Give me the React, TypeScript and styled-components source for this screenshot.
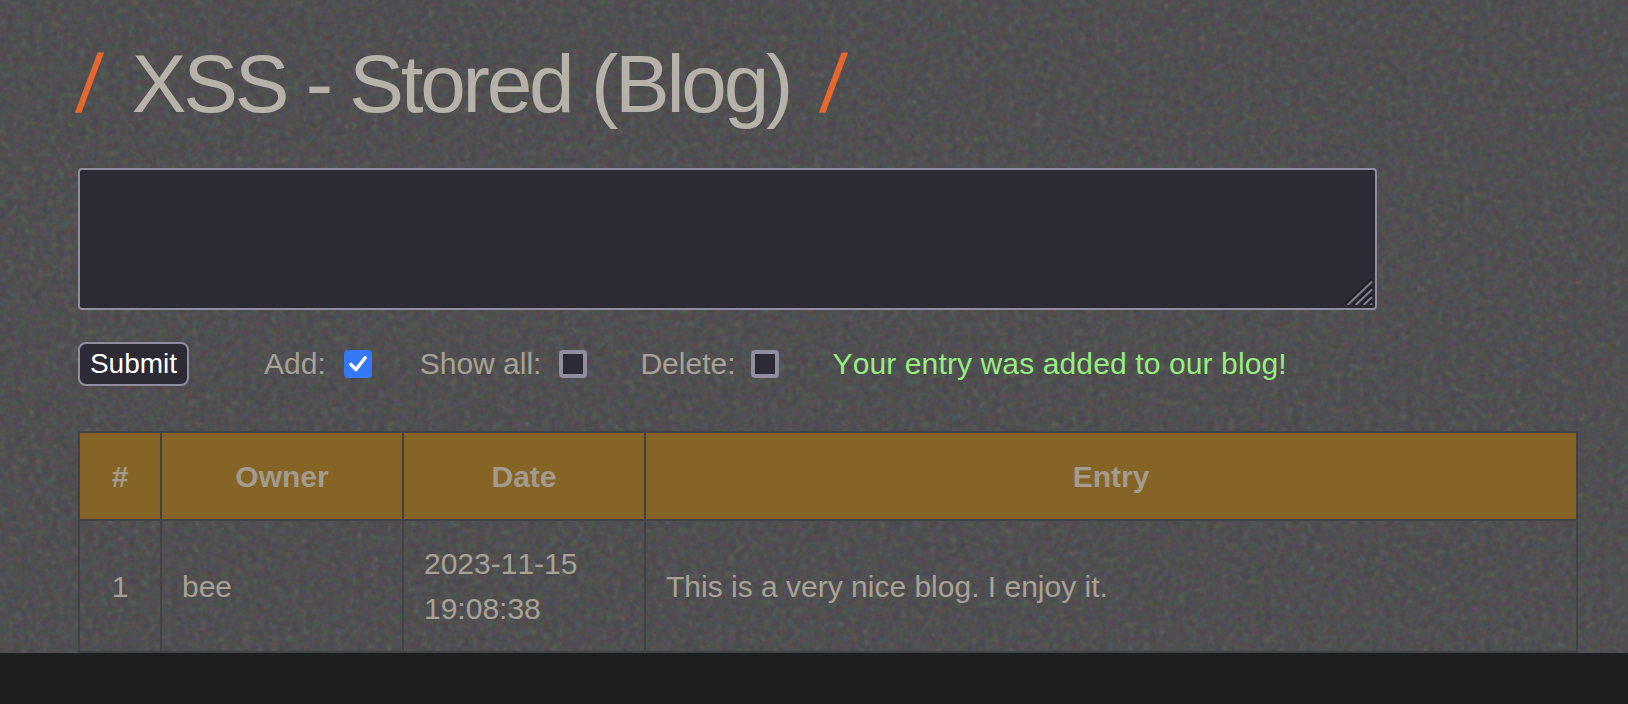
import React from "react";
import styled, { createGlobalStyle } from "styled-components";

const Global = createGlobalStyle`
  html, body { margin: 0; padding: 0; height: 100%; background: #1d1e20; }
  #root { height: 100%; }
  * { box-sizing: border-box; }
`;

const Page = styled.div`
  width: 1628px;
  height: 704px;
  display: flex;
  flex-direction: column;
  overflow: hidden;
  font-family: "Liberation Sans", Arial, sans-serif;
  font-kerning: none;
`;

const Main = styled.main`
  position: relative;
  flex: 0 0 653px;
  background: #4a4a4b;
  padding: 0 50px 0 78px;
  overflow: hidden;
`;

const Grain = styled.svg`
  position: absolute;
  inset: 0;
  width: 100%;
  height: 100%;
`;

const Content = styled.div`
  position: relative;
`;

const Title = styled.h1`
  margin: 0;
  height: 168px;
  padding-top: 37px;
  font-size: 82px;
  line-height: 94px;
  font-weight: 400;
  letter-spacing: -3.25px;
  color: #b6b2aa;
  white-space: nowrap;
`;

const Slash = styled.span`
  display: inline-block;
  color: #e8672f;
  letter-spacing: 0;
  transform: skewX(-6deg);
`;

const Gap = styled.span<{ $w: number }>`
  display: inline-block;
  width: ${(p) => p.$w}px;
`;

const EntryWrap = styled.div`
  position: relative;
  width: 1299px;
  height: 142px;
`;

const EntryBox = styled.textarea`
  display: block;
  width: 100%;
  height: 100%;
  background: #2b2a35;
  border: 2px solid #8f8d9f;
  border-radius: 4px;
  resize: none;
  outline: none;
`;

const Grip = styled.svg`
  position: absolute;
  right: 4px;
  bottom: 5px;
  width: 28px;
  height: 26px;
`;

const Controls = styled.div`
  display: flex;
  align-items: center;
  margin-top: 32px;
  height: 44px;
  font-size: 30px;
  color: #a8a296;
`;

const SubmitButton = styled.button`
  width: 111px;
  height: 44px;
  padding: 0;
  background: #2b2a35;
  border: 2px solid #8f8d9f;
  border-radius: 8px;
  color: #fff;
  font-family: "Liberation Sans", Arial, sans-serif;
  font-size: 28px;
  line-height: 40px;
  margin-right: 75px;
`;

const Label = styled.span<{ $gap: number }>`
  white-space: nowrap;
  margin-right: ${(p) => p.$gap}px;
`;

const Check = styled.span<{ $on?: boolean; $after: number }>`
  flex: none;
  display: flex;
  align-items: center;
  justify-content: center;
  width: 28px;
  height: 28px;
  margin-right: ${(p) => p.$after}px;
  border-radius: 4px;
  background: ${(p) => (p.$on ? "#3478f6" : "#2b2a35")};
  border: ${(p) => (p.$on ? "none" : "4px solid #8f8d9f")};
`;

const Message = styled.span`
  color: #96ee80;
  white-space: nowrap;
  letter-spacing: 0.12px;
`;

const Table = styled.table`
  margin-top: 45px;
  width: 1500px;
  table-layout: fixed;
  border-collapse: collapse;
  font-size: 30px;
  line-height: 45px;
  color: #a8a296;
`;

const HeadCell = styled.th`
  height: 88px;
  padding: 0 20px;
  background: #866425;
  border: 2px solid #414244;
  color: #a39b8f;
  font-weight: 700;
  text-align: center;
`;

const Cell = styled.td<{ $center?: boolean }>`
  height: 132px;
  padding: 20px;
  border: 2px solid #414244;
  text-align: ${(p) => (p.$center ? "center" : "left")};
`;

const BottomBar = styled.footer`
  flex: 1;
  background: #1d1e20;
`;

export default function App() {
  return (
    <Page>
      <Global />
      <Main>
        <Grain aria-hidden="true">
          <filter id="grain" x="0" y="0" width="100%" height="100%" colorInterpolationFilters="sRGB">
            <feTurbulence type="fractalNoise" baseFrequency="0.14" numOctaves="2" seed="7" />
            <feColorMatrix
              type="matrix"
              values="0 0 0 0 0.42  0 0 0 0 0.42  0 0 0 0 0.42  0 0 0 0 0  9 9 0 0 -10.6"
            />
          </filter>
          <rect width="100%" height="100%" filter="url(#grain)" opacity="0.22" />
        </Grain>
        <Content>
          <Title>
            <Slash>/</Slash>
            <Gap $w={31} />
            XSS - Stored (Blog)
            <Gap $w={32} />
            <Slash>/</Slash>
          </Title>
          <EntryWrap>
            <EntryBox aria-label="Entry" />
            <Grip viewBox="0 0 28 26" aria-hidden="true">
              <g strokeWidth="2.2">
                <path d="M1 25 L27 0" stroke="#1d1c24" />
                <path d="M2.5 26 L27 2.5" stroke="#7d7c86" />
                <path d="M9 25 L27 8" stroke="#1d1c24" />
                <path d="M10.5 26 L27 10.5" stroke="#7d7c86" />
                <path d="M17 25 L27 15.5" stroke="#1d1c24" />
                <path d="M18.5 26 L27 18" stroke="#7d7c86" />
                <path d="M24 25 L27 22" stroke="#1d1c24" />
                <path d="M25.5 26 L27 24.5" stroke="#7d7c86" />
              </g>
            </Grip>
          </EntryWrap>
          <Controls>
            <SubmitButton type="button">Submit</SubmitButton>
            <Label $gap={18}>Add:</Label>
            <Check $on $after={48}>
              <svg width="20" height="18" viewBox="0 0 20 18" aria-hidden="true">
                <path d="M3 9.5 L8 14.5 L17 3" fill="none" stroke="#fff" strokeWidth="3.6" strokeLinecap="round" strokeLinejoin="round" />
              </svg>
            </Check>
            <Label $gap={18}>Show all:</Label>
            <Check $after={53} />
            <Label $gap={15}>Delete:</Label>
            <Check $after={54} />
            <Message>Your entry was added to our blog!</Message>
          </Controls>
          <Table>
            <colgroup>
              <col width="82" />
              <col width="242" />
              <col width="242" />
              <col />
            </colgroup>
            <thead>
              <tr>
                <HeadCell>#</HeadCell>
                <HeadCell>Owner</HeadCell>
                <HeadCell>Date</HeadCell>
                <HeadCell>Entry</HeadCell>
              </tr>
            </thead>
            <tbody>
              <tr>
                <Cell $center>1</Cell>
                <Cell>bee</Cell>
                <Cell>
                  2023-11-15
                  <br />
                  19:08:38
                </Cell>
                <Cell>This is a very nice blog. I enjoy it.</Cell>
              </tr>
            </tbody>
          </Table>
        </Content>
      </Main>
      <BottomBar />
    </Page>
  );
}
